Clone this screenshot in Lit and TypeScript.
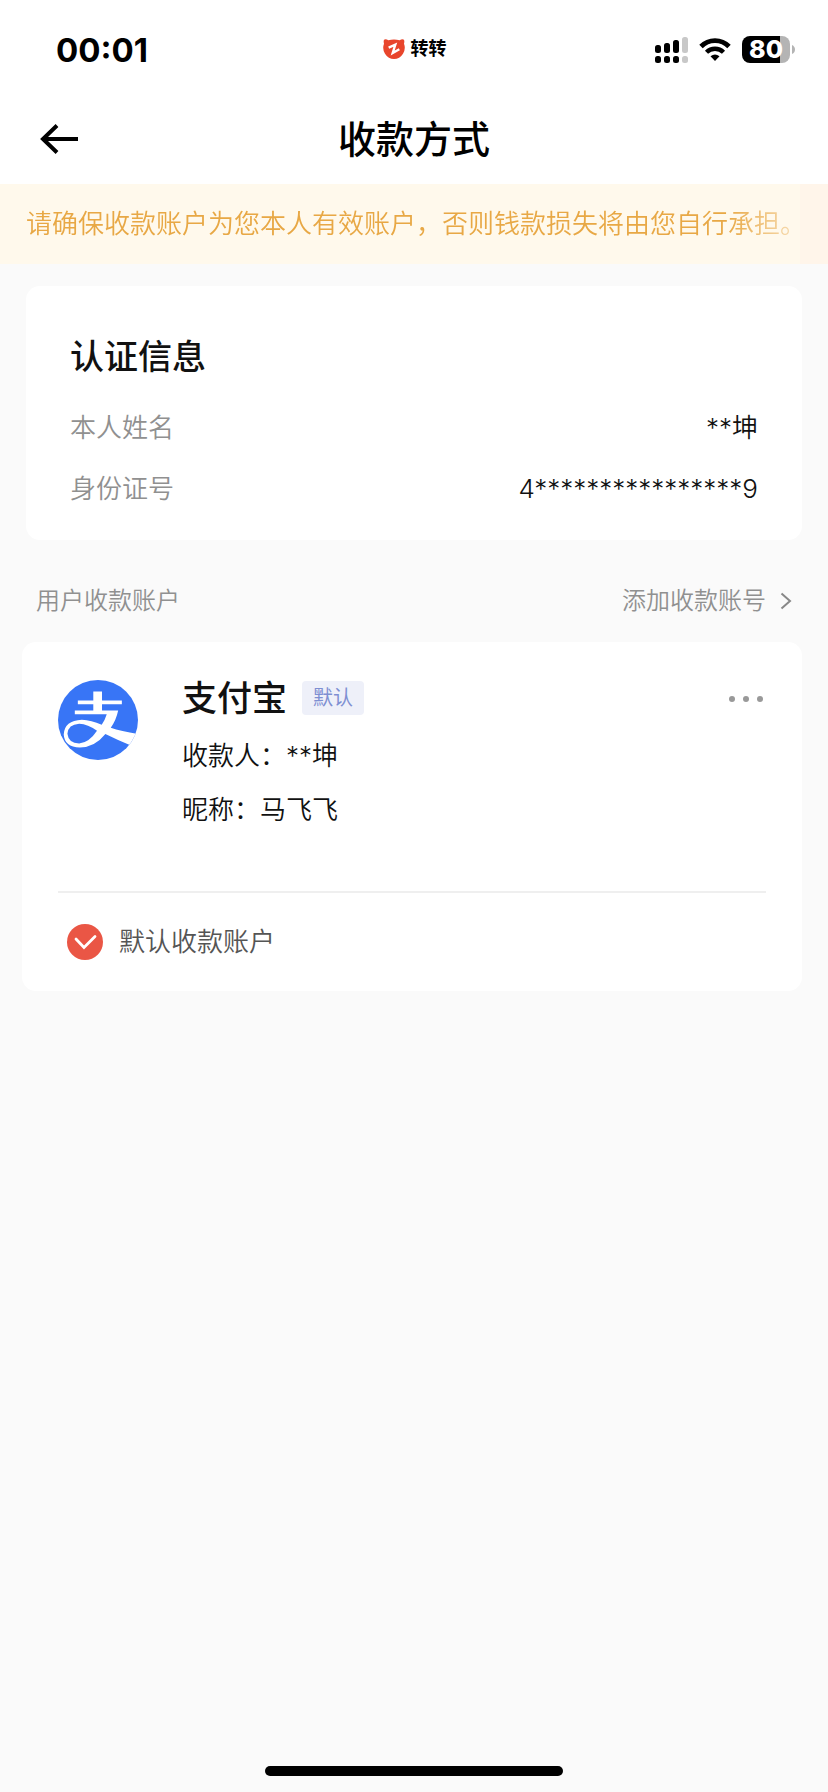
import { LitElement, html, css, svg } from "lit";
import { customElement, property, state } from "lit/decorators.js";

const backArrow = svg`<path d="M38 17H3M17 3.500L3 17L17 30.500" fill="none" stroke="currentColor" stroke-width="4"/>`;

@customElement("status-bar")
export class StatusBar extends LitElement {
  @property() time = "";
  @property() app = "";
  @property({ type: Number }) battery = 0;

  static styles = css`
    :host {
      display: grid;
      grid-template-columns: 1fr auto 1fr;
      align-items: center;
      height: 94px;
      padding: 4px 33px 0 56px;
      box-sizing: border-box;
      color: #000;
    }
    .time {
      padding-top: 2px;
      font: 700 33px/40px Inter, sans-serif;
    }
    .app {
      display: flex;
      align-items: center;
      gap: 6px;
      font-size: 18px;
      line-height: 24px;
      font-weight: 700;
      margin-right: 22px;
    }
    .icons {
      display: flex;
      justify-content: flex-end;
      align-items: center;
      gap: 11px;
    }
    .battery {
      display: flex;
      align-items: center;
      gap: 2px;
    }
    .cell {
      width: 48px;
      height: 27px;
      border-radius: 8px;
      background: linear-gradient(90deg, #000 80%, #b4b4b4 80%);
      color: #fff;
      font: 800 25px/27px Inter, sans-serif;
      text-align: center;
    }
    svg {
      display: block;
    }
  `;

  render() {
    return html`
      <span class="time">${this.time}</span>
      <span class="app">
        <svg width="22" height="20" viewBox="0 0 66 60" aria-hidden="true">
          <path d="M3 2Q9-1 16 4Q33-1 50 4Q57-1 63 2Q65 7 63 14Q69 30 60 44Q50 60 33 60Q16 60 6 44Q-3 30 3 14Q1 7 3 2Z" fill="#e8452c"/>
          <path d="M17 26L37 17L29 42L49 31" fill="none" stroke="#fff" stroke-width="7"/>
        </svg>
        ${this.app}
      </span>
      <span class="icons">
        <svg width="33" height="27" viewBox="0 0 33 27" aria-hidden="true">
          <rect x="0" y="9" width="6" height="8" rx="2.500"/>
          <rect x="9" y="7" width="6" height="10" rx="2.500"/>
          <rect x="18" y="4" width="6" height="13" rx="2.500"/>
          <rect x="27" y="1" width="6" height="16" rx="2.500" fill="#c8c8c8"/>
          <rect x="0" y="20" width="6" height="7" rx="2.500"/>
          <rect x="9" y="20" width="6" height="7" rx="2.500"/>
          <rect x="18" y="20" width="6" height="7" rx="2.500"/>
          <rect x="27" y="20" width="6" height="7" rx="2.500" fill="#c8c8c8"/>
        </svg>
        <svg width="32" height="24" viewBox="0 0 32 24" aria-hidden="true">
          <path d="M2 9.500A19.500 19.500 0 0 1 30 9.500" fill="none" stroke="#000" stroke-width="4.800"/>
          <path d="M7.500 15.300A12 12 0 0 1 24.500 15.300" fill="none" stroke="#000" stroke-width="4.400"/>
          <path d="M11.500 19.300Q16 15.500 20.500 19.300L16 24Z"/>
        </svg>
        <span class="battery">
          <span class="cell">${this.battery}</span>
          <svg width="3" height="9" viewBox="0 0 3 9" aria-hidden="true"><path d="M0 0Q3 1.500 3 4.500Q3 7.500 0 9Z" fill="#b4b4b4"/></svg>
        </span>
      </span>
    `;
  }
}

@customElement("app-root")
export class AppRoot extends LitElement {
  @state() private isDefault = true;

  private identity = [
    { label: "本人姓名", value: "**坤" },
    { label: "身份证号", value: "4****************9" },
  ];

  static styles = css`
    :host {
      display: flex;
      flex-direction: column;
      min-height: 100vh;
      background: #fafafa;
      color: #111;
      font: 350 26px/36px Inter, "Noto Sans CJK SC", sans-serif;
    }
    h1, h2, h3, p, dl, dd {
      margin: 0;
      font-weight: inherit;
    }
    button {
      padding: 0;
      border: 0;
      background: none;
      color: inherit;
      font: inherit;
    }
    svg {
      display: block;
    }
    .top {
      background: #fff;
    }
    .nav {
      display: grid;
      grid-template-columns: 1fr auto 1fr;
      align-items: center;
      height: 90px;
      padding: 0 40px;
      color: #000;
    }
    .nav h1 {
      font-size: 38px;
      line-height: 56px;
      font-weight: 500;
    }
    .back {
      justify-self: start;
    }
    .notice {
      padding: 22px 26px;
      background: linear-gradient(90deg, #fff9ec calc(100% - 28px), #fff5ea calc(100% - 28px));
      color: #e8a845;
      white-space: nowrap;
      overflow: hidden;
    }
    .notice p {
      -webkit-mask-image: linear-gradient(90deg, #000 calc(100% - 76px), rgba(0, 0, 0, 0.4) calc(100% - 12px));
      mask-image: linear-gradient(90deg, #000 calc(100% - 76px), rgba(0, 0, 0, 0.4) calc(100% - 12px));
    }
    main {
      flex: 1;
      padding: 22px 26px;
    }
    .card {
      background: #fff;
      border-radius: 14px;
    }
    .identity {
      padding: 46px 44px 33px;
    }
    .identity h2 {
      font-size: 34px;
      line-height: 50px;
      font-weight: 500;
    }
    .fields {
      display: grid;
      gap: 25px;
      padding-top: 28px;
    }
    .field {
      display: flex;
      justify-content: space-between;
    }
    dt {
      color: #909090;
    }
    .section {
      display: flex;
      justify-content: space-between;
      align-items: center;
      padding: 43px 10px 23px;
      font-size: 24px;
      color: #909090;
    }
    .section h2 {
      font-size: 24px;
    }
    .add {
      display: flex;
      align-items: center;
      gap: 14px;
      color: inherit;
      text-decoration: none;
    }
    .account {
      margin-left: -4px;
      padding: 34px 36px 0;
    }
    .details {
      display: grid;
      grid-template-columns: 80px 1fr auto;
      column-gap: 44px;
      padding-bottom: 63px;
      border-bottom: 2px solid #efefef;
    }
    .logo {
      margin-top: 4px;
    }
    .info {
      display: grid;
      gap: 18px;
    }
    .name {
      display: flex;
      align-items: center;
      gap: 15px;
      height: 44px;
    }
    .name h3 {
      font-size: 35px;
      line-height: 44px;
      font-weight: 500;
    }
    .badge {
      padding: 2px 11px;
      border-radius: 4px;
      background: #eef0f9;
      color: #7e8fd2;
      font-size: 20px;
      line-height: 30px;
      font-weight: 400;
    }
    .person {
      display: grid;
      gap: 18px;
    }
    .more {
      align-self: start;
      padding: 20px 2px;
    }
    .default {
      display: flex;
      align-items: center;
      gap: 16px;
      height: 98px;
      padding-left: 9px;
      color: #555;
    }
    .tick {
      display: grid;
    }
    .tick input,
    .tick svg {
      grid-area: 1 / 1;
      width: 36px;
      height: 36px;
      margin: 0;
    }
    .tick input {
      appearance: none;
      box-sizing: border-box;
      border: 2px solid #ccc;
      border-radius: 50%;
    }
    .tick input:checked {
      border: 0;
      background: #ea5645;
    }
    .tick svg {
      pointer-events: none;
    }
    .home {
      align-self: center;
      width: 36%;
      height: 10px;
      margin-bottom: 16px;
      border-radius: 5px;
      background: #000;
    }
  `;

  private toggle(e: Event) {
    this.isDefault = (e.target as HTMLInputElement).checked;
  }

  render() {
    return html`
      <header class="top">
        <status-bar time="00:01" app="转转" battery="80"></status-bar>
        <div class="nav">
          <button class="back" aria-label="返回">
            <svg width="40" height="34" viewBox="0 0 40 34">${backArrow}</svg>
          </button>
          <h1>收款方式</h1>
        </div>
      </header>
      <div class="notice"><p>请确保收款账户为您本人有效账户，否则钱款损失将由您自行承担。</p></div>
      <main>
        <section class="card identity">
          <h2>认证信息</h2>
          <dl class="fields">
            ${this.identity.map((f) => html`<div class="field"><dt>${f.label}</dt><dd>${f.value}</dd></div>`)}
          </dl>
        </section>
        <div class="section">
          <h2>用户收款账户</h2>
          <a class="add" href="#add">
            添加收款账号
            <svg width="12" height="18" viewBox="0 0 12 18" aria-hidden="true">
              <path d="M1.500 1.500L10 9L1.500 16.500" fill="none" stroke="#888" stroke-width="2"/>
            </svg>
          </a>
        </div>
        <section class="card account">
          <div class="details">
            <svg class="logo" width="80" height="80" viewBox="23 31 238 238" aria-hidden="true">
              <clipPath id="disc"><circle cx="142" cy="150" r="119"/></clipPath>
              <circle cx="142" cy="150" r="119" fill="#3875f6"/>
              <g clip-path="url(#disc)">
                <path d="M128 65H154V92H213V103H154V122H202Q196 151 180 173Q210 183 262 192L240 226Q200 210 164 192Q132 232 88 232Q42 230 40 193Q42 151 94 149Q122 150 153 164Q163 150 168 133H73V122H128V103H82V92H128Z" fill="#fff"/>
                <path d="M139 182Q112 162 86 161Q53 163 51 191Q54 219 86 220Q116 217 139 182Z" fill="#3875f6"/>
              </g>
            </svg>
            <div class="info">
              <div class="name"><h3>支付宝</h3><span class="badge">默认</span></div>
              <div class="person">
                <p>收款人：**坤</p>
                <p>昵称：马飞飞</p>
              </div>
            </div>
            <button class="more" aria-label="更多">
              <svg width="36" height="6" viewBox="0 0 36 6">
                <g fill="#999"><circle cx="4" cy="3" r="3"/><circle cx="18" cy="3" r="3"/><circle cx="32" cy="3" r="3"/></g>
              </svg>
            </button>
          </div>
          <label class="default">
            <span class="tick">
              <input type="checkbox" .checked=${this.isDefault} @change=${this.toggle} />
              <svg viewBox="0 0 36 36" aria-hidden="true">
                <path d="M9 15L17 23.500L28 12.500" fill="none" stroke="#fff" stroke-width="2.800" stroke-linecap="round"/>
              </svg>
            </span>
            默认收款账户
          </label>
        </section>
      </main>
      <div class="home"></div>
    `;
  }
}
